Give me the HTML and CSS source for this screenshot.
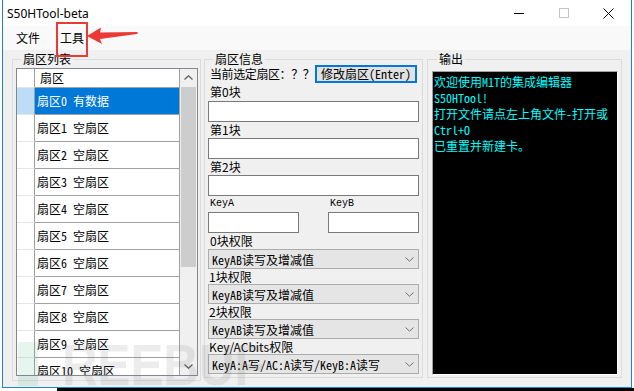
FILE: index.html
```html
<!DOCTYPE html>
<html lang="zh-CN">
<head>
<meta charset="utf-8">
<title>S50HTool-beta</title>
<link rel="stylesheet" href="styles.css">
</head>
<body>
<div class="window">
  <div class="titlebar">
    <span class="title">S50HTool-beta</span>
    <div class="controls">
      <span class="ctl"><svg width="10" height="10" viewBox="0 0 10 10"><path d="M0 5.5H10" stroke="#000" stroke-width="1"/></svg></span>
      <span class="ctl"><svg width="10" height="10" viewBox="0 0 10 10"><rect x="0.5" y="0.5" width="9" height="9" fill="none" stroke="#c4c4c4"/></svg></span>
      <span class="ctl"><svg width="11" height="11" viewBox="0 0 11 11"><path d="M0.5 0.5L10.5 10.5M10.5 0.5L0.5 10.5" stroke="#000" stroke-width="1"/></svg></span>
    </div>
  </div>
  <div class="menubar">
    <span class="menu-item">文件</span>
    <span class="menu-item">工具</span>
  </div>
  <div class="content">
    <fieldset class="group group-list">
      <legend>扇区列表</legend>
      <div class="grid">
        <div class="grid-body">
          <div class="grow head"><div class="rh"></div><div class="cell">扇区</div></div>
          <div class="grow sel"><div class="rh"></div><div class="cell">扇区0 有数据</div></div>
          <div class="grow"><div class="rh"></div><div class="cell">扇区1 空扇区</div></div>
          <div class="grow"><div class="rh"></div><div class="cell">扇区2 空扇区</div></div>
          <div class="grow"><div class="rh"></div><div class="cell">扇区3 空扇区</div></div>
          <div class="grow"><div class="rh"></div><div class="cell">扇区4 空扇区</div></div>
          <div class="grow"><div class="rh"></div><div class="cell">扇区5 空扇区</div></div>
          <div class="grow"><div class="rh"></div><div class="cell">扇区6 空扇区</div></div>
          <div class="grow"><div class="rh"></div><div class="cell">扇区7 空扇区</div></div>
          <div class="grow"><div class="rh"></div><div class="cell">扇区8 空扇区</div></div>
          <div class="grow"><div class="rh"></div><div class="cell">扇区9 空扇区</div></div>
          <div class="grow"><div class="rh"></div><div class="cell">扇区10 空扇区</div></div>
        </div>
        <div class="vscroll">
          <div class="sb-btn"><svg width="9" height="5" viewBox="0 0 9 5"><path d="M0.5 4.5L4.5 0.8L8.5 4.5" fill="none" stroke="#606060" stroke-width="1.3"/></svg></div>
          <div class="sb-thumb"></div>
          <div class="sb-space"></div>
          <div class="sb-btn"><svg width="9" height="5" viewBox="0 0 9 5"><path d="M0.5 0.5L4.5 4.2L8.5 0.5" fill="none" stroke="#606060" stroke-width="1.3"/></svg></div>
        </div>
      </div>
    </fieldset>

    <fieldset class="group group-info">
      <legend>扇区信息</legend>
      <div class="sel-row"><span class="sel-lbl">当前选定扇区：？？</span><button class="btn-focus">修改扇区(Enter)</button></div>
      <div class="lbl first">第0块</div>
      <div class="tb"></div>
      <div class="lbl">第1块</div>
      <div class="tb"></div>
      <div class="lbl">第2块</div>
      <div class="tb"></div>
      <div class="key-lbls"><span>KeyA</span><span>KeyB</span></div>
      <div class="keys"><div class="tb"></div><div class="tb"></div></div>
      <div class="lbl">0块权限</div>
      <div class="combo"><span>KeyAB读写及增减值</span><svg width="9" height="5" viewBox="0 0 9 5"><path d="M0.5 0.5L4.5 4.2L8.5 0.5" fill="none" stroke="#707070" stroke-width="1"/></svg></div>
      <div class="lbl s">1块权限</div>
      <div class="combo"><span>KeyAB读写及增减值</span><svg width="9" height="5" viewBox="0 0 9 5"><path d="M0.5 0.5L4.5 4.2L8.5 0.5" fill="none" stroke="#707070" stroke-width="1"/></svg></div>
      <div class="lbl s">2块权限</div>
      <div class="combo"><span>KeyAB读写及增减值</span><svg width="9" height="5" viewBox="0 0 9 5"><path d="M0.5 0.5L4.5 4.2L8.5 0.5" fill="none" stroke="#707070" stroke-width="1"/></svg></div>
      <div class="lbl s">Key/ACbits权限</div>
      <div class="combo"><span>KeyA:A写/AC:A读写/KeyB:A读写</span><svg width="9" height="5" viewBox="0 0 9 5"><path d="M0.5 0.5L4.5 4.2L8.5 0.5" fill="none" stroke="#707070" stroke-width="1"/></svg></div>
    </fieldset>

    <fieldset class="group group-out">
      <legend>输出</legend>
      <div class="console">
        <div>欢迎使用M1T的集成编辑器</div>
        <div>S50HTool!</div>
        <div>打开文件请点左上角文件-打开或</div>
        <div>Ctrl+O</div>
        <div>已重置并新建卡。</div>
      </div>
    </fieldset>
  </div>

  <div class="annot-box"></div>
  <svg class="annot-arrow" width="56" height="24" viewBox="0 0 56 24">
    <polygon points="0,12 14,3.5 13,8.5 50,8 51,9 50,10 13,15 15,20" fill="#ea3a33"/>
  </svg>
  <div class="watermark"><span class="wm-logo"></span><span class="wm-text">REEBUF</span></div>
</div>
<div class="desk-strip"></div>
</body>
</html>
```

FILE: styles.css
```css
* {
  box-sizing: border-box;
}

body {
  margin: 0;
  width: 634px;
  height: 391px;
  overflow: hidden;
  background: #fff;
  font-family: "Noto Sans CJK SC", sans-serif;
  font-size: 12px;
  color: #000;
}

.window {
  position: relative;
  margin-left: 2px;
  width: 630px;
  height: 388px;
  border: 1px solid #1883d7;
  border-top: 0;
  background: #f0f0f0;
  display: flex;
  flex-direction: column;
  overflow: hidden;
}

.titlebar {
  height: 26px;
  flex: none;
  background: #fff;
  display: flex;
  align-items: center;
}

.title {
  padding-left: 4px;
  font-family: "Noto Sans", "Segoe UI", sans-serif;
  font-size: 12px;
}

.controls {
  margin-left: auto;
  display: flex;
  height: 26px;
}

.ctl {
  width: 45px;
  height: 26px;
  display: flex;
  align-items: center;
  justify-content: center;
}

.menubar {
  height: 24px;
  flex: none;
  background: #f9f9f9;
  display: flex;
  align-items: center;
  padding-left: 3px;
}

.menu-item {
  padding: 0 10px;
  line-height: 24px;
}

.content {
  flex: 1;
  display: flex;
  align-items: flex-start;
  padding: 3px 0 0 9px;
}

fieldset.group {
  margin: 0;
  border: 1px solid #dcdcdc;
  min-width: 0;
  flex: none;
}

legend {
  margin-left: 5px;
  padding: 0 2px;
  line-height: 12px;
  font-size: 12px;
}

fieldset.group-list {
  width: 189px;
  padding: 3px 2px 4px 3px;
  margin-right: 3px;
}

fieldset.group-info {
  width: 219px;
  padding: 0 3px 3px 3px;
  margin-right: 4px;
}

fieldset.group-out {
  width: 195px;
  padding: 6px 3px 2px 4px;
}

/* grid */
.grid {
  width: 182px;
  height: 308px;
  border: 1px solid #828790;
  background: #fff;
  display: flex;
}

.grid-body {
  width: 163px;
  overflow: hidden;
}

.grow {
  display: flex;
  height: 27px;
}

.rh {
  width: 18px;
  flex: none;
  border-right: 1px solid #a0a0a0;
  border-bottom: 1px solid #e6e6e6;
}

.cell {
  width: 145px;
  flex: none;
  border-right: 1px solid #a0a0a0;
  border-bottom: 1px solid #a0a0a0;
  padding-left: 2px;
  line-height: 26px;
  white-space: nowrap;
  overflow: hidden;
  font-family: "Noto Sans Mono CJK SC", "Noto Sans CJK SC", monospace;
}

.grow.head {
  height: 19px;
}

.grow.head .cell {
  line-height: 18px;
  padding-left: 5px;
  font-family: "Noto Sans CJK SC", sans-serif;
}

.grow.sel .rh {
  background: #bddcf5;
}

.grow.sel .cell {
  background: #0078d7;
  color: #fff;
}

.vscroll {
  width: 17px;
  background: #f0f0f0;
  display: flex;
  flex-direction: column;
}

.sb-btn {
  height: 17px;
  flex: none;
  display: flex;
  align-items: center;
  justify-content: center;
}

.sb-thumb {
  height: 180px;
  flex: none;
  margin: 1px 1px 0;
  background: #cdcdcd;
}

.sb-space {
  flex: 1;
}

/* info group */
.sel-row {
  height: 18px;
  display: flex;
  align-items: center;
  justify-content: space-between;
  padding: 0 2px;
  line-height: 18px;
  white-space: nowrap;
}

.sel-lbl {
  letter-spacing: -0.4px;
}

.btn-focus {
  flex: none;
  width: 102px;
  height: 18px;
  margin: 0;
  padding: 0;
  border: 2px solid #0078d7;
  background: #e1e1e1;
  font-family: "Noto Sans Mono CJK SC", "Noto Sans CJK SC", monospace;
  font-size: 12px;
  line-height: 14px;
  color: #000;
  white-space: nowrap;
}

.lbl {
  height: 16px;
  line-height: 16px;
  padding-left: 2px;
  white-space: nowrap;
}

.lbl.first {
  height: 18px;
  line-height: 18px;
}

.lbl.s {
  height: 15px;
  line-height: 15px;
  padding-left: 1px;
}

.tb {
  height: 21px;
  background: #fff;
  border: 1px solid #7a7a7a;
}

.key-lbls {
  height: 16px;
  display: grid;
  grid-template-columns: 91px 91px;
  justify-content: space-between;
  font-family: "Liberation Mono", monospace;
  font-size: 10px;
  line-height: 16px;
}

.key-lbls span {
  padding-left: 2px;
}

.keys {
  display: grid;
  grid-template-columns: 91px 91px;
  justify-content: space-between;
}

.combo {
  height: 20px;
  background: #e5e5e5;
  border: 1px solid #acacac;
  display: flex;
  align-items: center;
  padding: 0 4px 0 3px;
  font-family: "Noto Sans Mono CJK SC", "Noto Sans CJK SC", monospace;
  font-size: 12px;
  white-space: nowrap;
}

.combo svg {
  margin-left: auto;
}

/* output */
.console {
  width: 186px;
  height: 304px;
  background: #000;
  border: 1px solid;
  border-color: #a0a0a0 #fff #fff #a0a0a0;
  padding: 2px 0 0 1px;
  color: #00ffff;
  font-family: "Noto Sans Mono CJK SC", "Noto Sans CJK SC", monospace;
  font-size: 12px;
  line-height: 16px;
  white-space: nowrap;
  overflow: hidden;
}

/* annotations */
.annot-box {
  position: absolute;
  left: 53px;
  top: 22px;
  width: 32px;
  height: 35px;
  border: 2px solid #ea3a33;
}

.annot-arrow {
  position: absolute;
  left: 84px;
  top: 24px;
}

.watermark {
  position: absolute;
  left: 15px;
  top: 336px;
  display: flex;
  align-items: flex-start;
  pointer-events: none;
}

.wm-logo {
  width: 20px;
  height: 44px;
  margin-top: 6px;
  background: rgba(40, 160, 110, 0.11);
}

.wm-text {
  margin-left: 24px;
  font-family: "Liberation Sans", sans-serif;
  font-weight: bold;
  font-size: 58px;
  line-height: 58px;
  color: rgba(110, 110, 110, 0.13);
  transform: scaleX(0.85);
  transform-origin: left top;
}

.desk-strip {
  width: 634px;
  height: 3px;
  background: linear-gradient(to right, #fff 57px, #000 57px);
}
```
